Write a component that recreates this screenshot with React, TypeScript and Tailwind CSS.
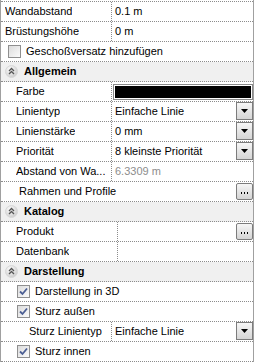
import React from "react";

const font = { fontFamily: '"Liberation Sans", Arial, sans-serif' };

function Check({ checked }: { checked?: boolean }) {
  return (
    <span className="relative flex h-[13px] w-[13px] shrink-0 items-center justify-center border border-[#8f8f8f] bg-gradient-to-br from-[#dcdcdc] to-[#fbfbfb]">
      {checked && (
        <svg width="11" height="11" viewBox="0 0 11 11" className="absolute">
          <path d="M2 5.5 L4.5 8 L9 2.5" fill="none" stroke="#4c5f94" strokeWidth="1.8" />
        </svg>
      )}
    </span>
  );
}

function Drop() {
  return (
    <span className="flex h-[18px] w-[17px] shrink-0 items-center justify-center border border-[#7c7c7c] bg-gradient-to-b from-[#f6f6f6] to-[#d6d6d6]">
      <svg width="7" height="4" viewBox="0 0 7 4">
        <path d="M0 0 H7 L3.5 4 Z" fill="#000" />
      </svg>
    </span>
  );
}

function Dots() {
  return (
    <span className="flex h-[17px] w-[17px] shrink-0 items-end justify-center rounded-[2px] border border-[#7c7c7c] bg-gradient-to-b from-[#f6f6f6] to-[#d4d4d4] pb-[5px]">
      <svg width="7" height="2" viewBox="0 0 7 2">
        <rect x="0" y="0" width="1" height="2" fill="#000" />
        <rect x="3" y="0" width="1" height="2" fill="#000" />
        <rect x="6" y="0" width="1" height="2" fill="#000" />
      </svg>
    </span>
  );
}

function Row({ label, pl, divider = 112, children }: { label: React.ReactNode; pl: number; divider?: number; children?: React.ReactNode }) {
  return (
    <div className="flex h-5 border-b border-dotted border-[#8c8c8c]">
      <div className="flex shrink-0 items-center border-r border-dotted border-[#8c8c8c]" style={{ width: divider - 1, paddingLeft: pl - 1 }}>
        <span className="truncate">{label}</span>
      </div>
      <div className="flex min-w-0 flex-1 items-start pl-[3px]">{children}</div>
    </div>
  );
}

function Header({ title }: { title: string }) {
  return (
    <div className="flex h-5 items-center gap-[6px] border-b border-dotted border-[#8c8c8c] bg-[#f0f0f0] pl-[4px]">
      <svg width="13" height="13" viewBox="0 0 13 13">
        <defs>
          <radialGradient id="g" cx="0.4" cy="0.35" r="0.7">
            <stop offset="0" stopColor="#ffffff" />
            <stop offset="1" stopColor="#c9c9c9" />
          </radialGradient>
        </defs>
        <circle cx="6.5" cy="6.5" r="6" fill="url(#g)" stroke="#d8d8d8" />
        <path d="M4 6 L6.5 3.5 L9 6 M4 9 L6.5 6.5 L9 9" fill="none" stroke="#555" strokeWidth="1.3" />
      </svg>
      <span className="font-bold">{title}</span>
    </div>
  );
}

export default function App() {
  return (
    <div className="h-[362px] w-[256px] overflow-hidden bg-white text-[11px] text-black" style={font}>
      <div className="w-[254px] border-x border-[#a0a0a0] pt-[1px]">
        <div className="border-t border-dotted border-[#8c8c8c]">
          <Row label="Wandabstand" pl={5}>
            <span className="leading-[19px]">0.1 m</span>
          </Row>
          <Row label="Brüstungshöhe" pl={5}>
            <span className="leading-[19px]">0 m</span>
          </Row>
          <div className="flex h-5 items-center gap-[5px] border-b border-dotted border-[#8c8c8c] pl-[7px]">
            <Check />
            <span>Geschoßversatz hinzufügen</span>
          </div>
          <Header title="Allgemein" />
          <Row label="Farbe" pl={16}>
            <div className="mt-[2px] mr-[0px] h-[16px] flex-1 border border-[#8a8a8a] bg-white p-[1px] -ml-[2px]">
              <div className="h-full w-full bg-black" />
            </div>
          </Row>
          <Row label="Linientyp" pl={16}>
            <span className="flex-1 leading-[19px]">Einfache Linie</span>
            <Drop />
          </Row>
          <Row label="Linienstärke" pl={16}>
            <span className="flex-1 leading-[19px]">0 mm</span>
            <Drop />
          </Row>
          <Row label="Priorität" pl={16}>
            <span className="flex-1 leading-[19px]">8 kleinste Priorität</span>
            <Drop />
          </Row>
          <Row label="Abstand von Wa..." pl={16}>
            <span className="leading-[19px] text-[#8d8d8d]">6.3309 m</span>
          </Row>
          <div className="flex h-5 items-start border-b border-dotted border-[#8c8c8c] pl-[18px]">
            <span className="flex-1 leading-[19px]">Rahmen und Profile</span>
            <span className="mt-[1px]">
              <Dots />
            </span>
          </div>
          <Header title="Katalog" />
          <Row label="Produkt" pl={16} divider={118}>
            <span className="flex-1" />
            <span className="mt-[1px]">
              <Dots />
            </span>
          </Row>
          <Row label="Datenbank" pl={16} divider={118} />
          <Header title="Darstellung" />
          <div className="flex h-5 items-center gap-[5px] border-b border-dotted border-[#8c8c8c] pl-[16px]">
            <Check checked />
            <span>Darstellung in 3D</span>
          </div>
          <div className="flex h-5 items-center gap-[5px] border-b border-dotted border-[#8c8c8c] pl-[16px]">
            <Check checked />
            <span>Sturz außen</span>
          </div>
          <Row label="Sturz Linientyp" pl={29}>
            <span className="flex-1 leading-[19px]">Einfache Linie</span>
            <Drop />
          </Row>
          <div className="flex h-5 items-center gap-[5px] border-b border-dotted border-[#8c8c8c] pl-[16px]">
            <Check checked />
            <span>Sturz innen</span>
          </div>
        </div>
      </div>
    </div>
  );
}
